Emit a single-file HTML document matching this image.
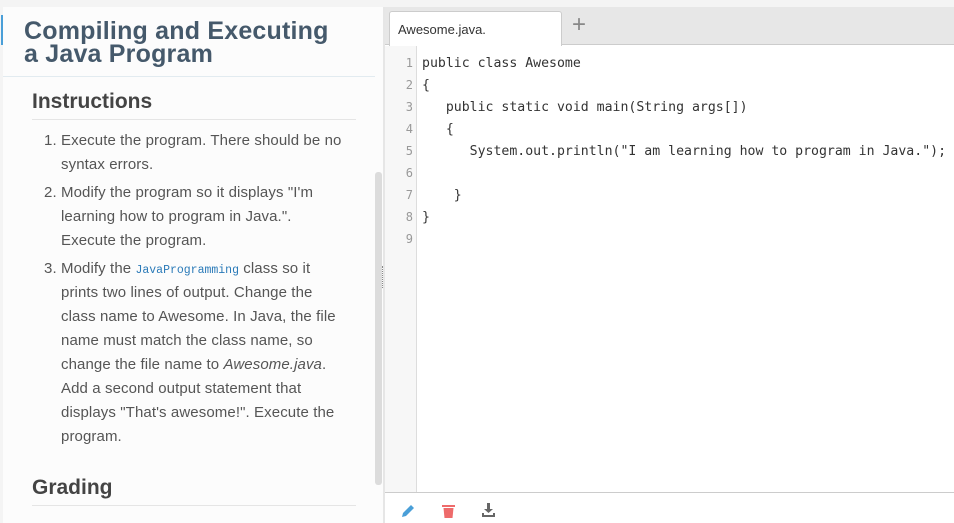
<!DOCTYPE html>
<html><head><style>
*{margin:0;padding:0;box-sizing:border-box}
body{width:954px;height:523px;overflow:hidden;background:#f4f4f4;font-family:"Liberation Sans",sans-serif;position:relative}
#left{position:absolute;left:3px;top:7px;width:380px;height:516px;background:#fcfcfc;overflow:hidden}
#bar{position:absolute;left:1px;top:15px;width:2px;height:30px;background:#4a9fd8}
h1{position:absolute;left:21px;top:13px;font-size:25px;line-height:23px;color:#45596b;font-weight:bold;letter-spacing:0.2px}
#hl{position:absolute;left:0;top:69px;width:372px;border-top:1px solid #e2ebf0}
h2{position:absolute;left:29px;font-size:21px;color:#444;font-weight:bold;width:324px;border-bottom:1px solid #e5e5e5;padding-bottom:5px}
ol{position:absolute;left:30px;top:122px;width:330px;font-size:15px;line-height:24px;color:#555;padding-left:28px;white-space:nowrap;letter-spacing:0.1px}
ol li{margin-bottom:4px}
code{font-family:"Liberation Mono",monospace;font-size:11.5px;color:#2a7ab8;line-height:10px;letter-spacing:0}
#sb{position:absolute;left:375px;top:172px;width:7px;height:313px;background:#dcdcdc;border-radius:3px}
#div{position:absolute;left:383px;top:7px;width:2px;height:516px;background:#e6e6e6}
#grip{position:absolute;left:382px;top:266px;width:1px;height:22px;border-left:1px dotted #888}
#ed{position:absolute;left:385px;top:7px;width:569px;height:516px;background:#fff}
#tabs{position:absolute;left:0;top:0;width:569px;height:38px;background:#e7e7e7;border-bottom:1px solid #ccc}
#tab{position:absolute;left:4px;top:4px;width:173px;height:35px;background:#fff;border:1px solid #ccc;border-bottom:none;border-radius:3px 3px 0 0;font-size:13px;color:#333;padding:10px 0 0 8px}
#plus{position:absolute;left:187px;top:4px;font-size:24px;color:#888;font-weight:300}
#gut{position:absolute;left:0;top:39px;width:32px;height:446px;background:#f7f7f7;border-right:1px solid #ddd}
.ln{position:absolute;left:0;width:28px;text-align:right;font-family:"DejaVu Sans Mono",monospace;font-size:12px;color:#999;margin-top:1px}
.cd{position:absolute;left:37px;font-family:"DejaVu Sans Mono",monospace;font-size:13.2px;color:#333;white-space:pre;margin-top:1px}
#tb{position:absolute;left:0;top:485px;width:569px;height:31px;border-top:1px solid #ccc;background:#fff}
</style></head><body>
<div id="left">
<h1>Compiling and Executing<br>a Java Program</h1>
<div id="hl"></div>
<h2 style="top:83px">Instructions</h2>
<ol>
<li>Execute the program. There should be no<br>syntax errors.</li>
<li>Modify the program so it displays "I'm<br>learning how to program in Java.".<br>Execute the program.</li>
<li>Modify the <code>JavaProgramming</code> class so it<br>prints two lines of output. Change the<br>class name to Awesome. In Java, the file<br>name must match the class name, so<br>change the file name to <i>Awesome.java</i>.<br>Add a second output statement that<br>displays "That's awesome!". Execute the<br>program.</li>
</ol>
<h2 style="top:469px">Grading</h2>
</div>
<div id="bar"></div>
<div id="sb"></div>
<div id="div"></div>
<div id="grip"></div>
<div id="ed">
<div id="tabs"><div id="tab">Awesome.java.</div><div id="plus">+</div></div>
<div id="gut"></div>
<div class="ln" style="top:48px">1</div><div class="cd" style="top:48px">public class Awesome</div>
<div class="ln" style="top:70px">2</div><div class="cd" style="top:70px">{</div>
<div class="ln" style="top:92px">3</div><div class="cd" style="top:92px">   public static void main(String args[])</div>
<div class="ln" style="top:114px">4</div><div class="cd" style="top:114px">   {</div>
<div class="ln" style="top:136px">5</div><div class="cd" style="top:136px">      System.out.println("I am learning how to program in Java.");</div>
<div class="ln" style="top:158px">6</div>
<div class="ln" style="top:180px">7</div><div class="cd" style="top:180px">    }</div>
<div class="ln" style="top:202px">8</div><div class="cd" style="top:202px">}</div>
<div class="ln" style="top:224px">9</div>
<div id="tb">
<svg style="position:absolute;left:16px;top:11px" width="14" height="14" viewBox="0 0 14 14"><path d="M1 13 L2 9 L10 1 L13 4 L5 12 Z" fill="#4a9fd8"/></svg>
<svg style="position:absolute;left:57px;top:11px" width="13" height="14" viewBox="0 0 13 14"><rect x="0" y="1" width="13" height="2" fill="#ee6b6b"/><path d="M1.5 4 H11.5 L10.5 14 H2.5 Z" fill="#ee6b6b"/></svg>
<svg style="position:absolute;left:97px;top:10px" width="13" height="15" viewBox="0 0 13 15"><path d="M5 0 H8 V6 H11 L6.5 10 L2 6 H5 Z" fill="#666"/><path d="M0 10 H2 V12 H11 V10 H13 V14 H0 Z" fill="#666"/></svg>
</div>
</div>
</body></html>
